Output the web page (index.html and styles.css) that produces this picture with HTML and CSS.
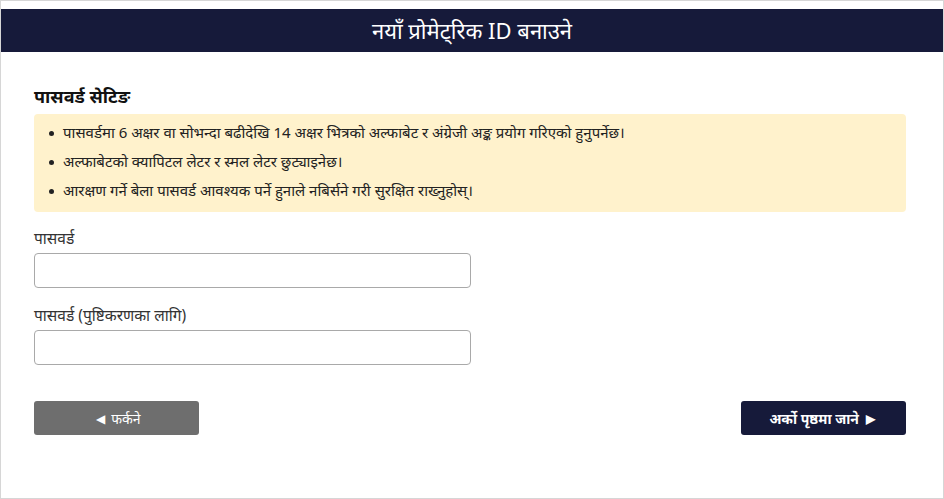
FILE: index.html
```html
<!DOCTYPE html>
<html lang="ne">
<head>
    <meta charset="UTF-8">
    <meta name="viewport" content="width=device-width, initial-scale=1.0">
    <title>नयाँ प्रोमेट्रिक ID बनाउने</title>
    <link rel="stylesheet" href="styles.css">
</head>
<body>
    <div class="page">
        <h1 class="page-title">नयाँ प्रोमेट्रिक ID बनाउने</h1>
        <div class="page-content">
            <h2 class="section-title">पासवर्ड सेटिङ</h2>
            <div class="notice">
                <ul>
                    <li>पासवर्डमा 6 अक्षर वा सोभन्दा बढीदेखि 14 अक्षर भित्रको अल्फाबेट र अंग्रेजी अङ्क प्रयोग गरिएको हुनुपर्नेछ।</li>
                    <li>अल्फाबेटको क्यापिटल लेटर र स्मल लेटर छुट्याइनेछ।</li>
                    <li>आरक्षण गर्ने बेला पासवर्ड आवश्यक पर्ने हुनाले नबिर्सने गरी सुरक्षित राख्नुहोस्।</li>
                </ul>
            </div>
            <div class="field">
                <label for="password">पासवर्ड</label>
                <input type="password" id="password" class="text-input">
            </div>
            <div class="field">
                <label for="password-confirm">पासवर्ड (पुष्टिकरणका लागि)</label>
                <input type="password" id="password-confirm" class="text-input">
            </div>
            <div class="actions">
                <button class="btn btn-back"><span class="arrow">&#9664;</span> फर्कने</button>
                <button class="btn btn-next">अर्को पृष्ठमा जाने <span class="arrow">&#9654;</span></button>
            </div>
        </div>
    </div>
</body>
</html>
```

FILE: styles.css
```css
* {
    margin: 0;
    padding: 0;
    box-sizing: border-box;
}
body {
    font-family: "Noto Sans", "Liberation Sans", sans-serif;
    color: #222;
    background: #fff;
}
.page {
    width: 944px;
    height: 499px;
    border: 1px solid #d6d6d6;
    padding-top: 8px;
}
.page-title {
    height: 43px;
    background-color: #161a3a;
    color: #fff;
    font-size: 22px;
    font-weight: normal;
    text-align: center;
    line-height: 43px;
}
.page-content {
    padding: 32px 37px 0 33px;
}
.section-title {
    font-size: 18px;
    font-weight: bold;
    color: #111;
    line-height: 24px;
}
.notice {
    margin-top: 6px;
    background-color: #fff2cc;
    border-radius: 4px;
    padding: 4px 14px 7px 14px;
}
.notice ul {
    list-style: none;
}
.notice li {
    position: relative;
    font-size: 15px;
    line-height: 29px;
    padding-left: 15px;
    color: #222;
}
.notice li::before {
    content: "";
    position: absolute;
    left: 1px;
    top: 13px;
    width: 5px;
    height: 5px;
    border-radius: 50%;
    background-color: #222;
}
.field {
    margin-top: 14px;
}
.field + .field {
    margin-top: 15px;
}
.field label {
    display: block;
    font-size: 15.5px;
    line-height: 24px;
    color: #333;
}
.text-input {
    display: block;
    margin-top: 3px;
    width: 437px;
    height: 35px;
    border: 1px solid #a9a9a9;
    border-radius: 4px;
    background: #fff;
}
.actions {
    margin-top: 36px;
    display: flex;
    justify-content: space-between;
}
.btn {
    width: 165px;
    height: 34px;
    border: none;
    border-radius: 3px;
    color: #fff;
    font-family: inherit;
    font-size: 14px;
    cursor: pointer;
}
.btn-back {
    background-color: #6e6e6e;
}
.btn-next {
    background-color: #161a3a;
    font-weight: bold;
}
.arrow {
    font-size: 12px;
    vertical-align: 1px;
    margin: 0 3px;
}
```
